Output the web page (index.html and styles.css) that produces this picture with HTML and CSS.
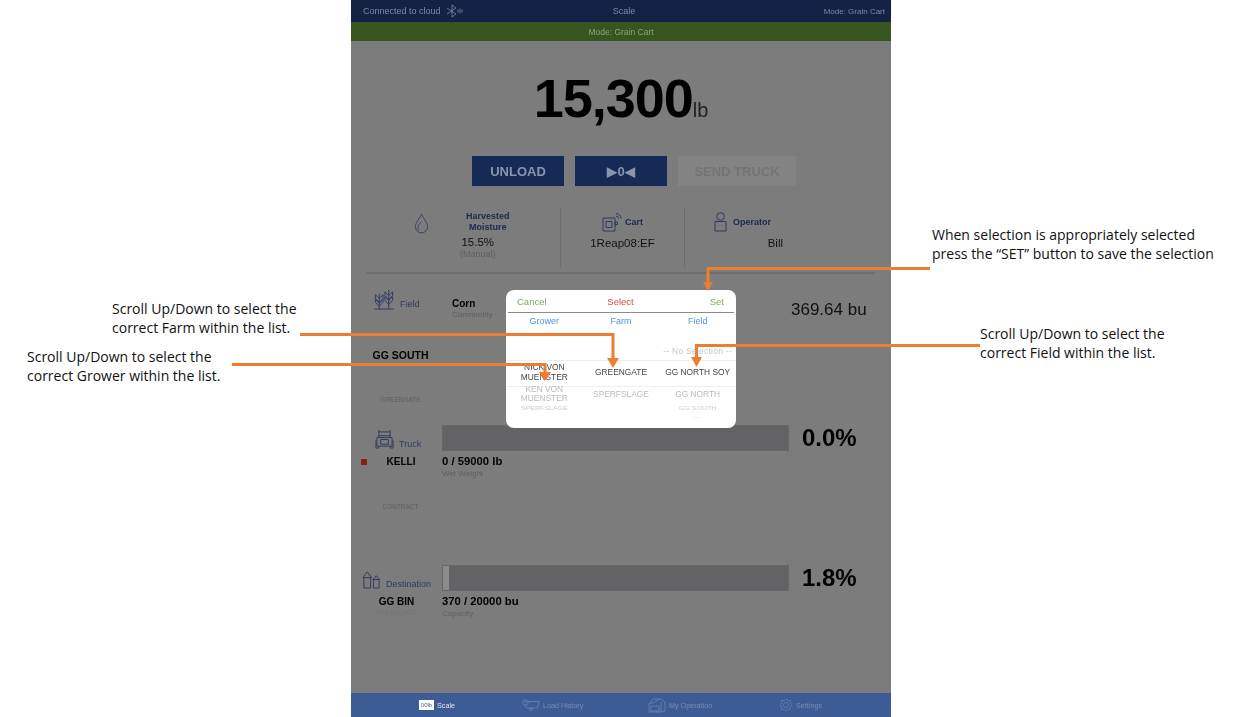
FILE: index.html
```html
<!DOCTYPE html>
<html lang="en">
<head>
    <meta charset="UTF-8">
    <meta name="viewport" content="width=device-width, initial-scale=1.0">
    <title>Scale - Grain Cart</title>
    <link rel="stylesheet" href="styles.css">
</head>
<body>
    <div class="app">
        <header class="topbar">
            <div class="cloud">
                <span>Connected to cloud</span>
                <svg class="bt-icon" viewBox="0 0 18 14" fill="none" stroke="currentColor" stroke-width=".8">
                    <path d="M1 4l9 6-4 3V1l4 3-9 6"/>
                    <path d="M12 5.500v3M14 4.500v5M16 5.500v3"/>
                </svg>
            </div>
            <div class="title">Scale</div>
            <div class="mode">Mode: Grain Cart</div>
        </header>
        <div class="modebar">Mode: Grain Cart</div>

        <div class="weight">15,300<span class="unit">lb</span></div>

        <div class="actions">
            <button class="btn">UNLOAD</button>
            <button class="btn btn-zero">&#9654;0&#9664;</button>
            <button class="btn btn-off">SEND TRUCK</button>
        </div>

        <section class="info">
            <div class="info-cell cell-moisture">
                <svg class="drop" viewBox="0 0 16 22" fill="none" stroke="currentColor" stroke-width="1">
                    <path d="M8 1C6 6 1.500 10 1.500 14.500a6.500 6.500 0 0 0 13 0C14.500 10 10 6 8 1z"/>
                    <path d="M5 18c-2-3 0-6 3-9"/>
                </svg>
                <div class="moisture">
                    <div class="label label-center">Harvested<br>Moisture</div>
                    <div class="value">15.5%</div>
                    <div class="sub">(Manual)</div>
                </div>
            </div>
            <div class="info-cell cell-cart">
                <div class="info-head">
                    <svg class="icon-cart" viewBox="0 0 20 20" fill="none" stroke="currentColor" stroke-width="1">
                        <path d="M1 6h12v13H1zM4 9.500h6v6H4zM13 10h2.500v2.500H13zM13 14h1"/>
                        <path d="M14 1.500a5 5 0 0 1 5 5M14 4a2.500 2.500 0 0 1 2.500 2.500"/>
                    </svg>
                    <span class="label">Cart</span>
                </div>
                <div class="value">1Reap08:EF</div>
            </div>
            <div class="info-cell cell-operator">
                <div class="info-head">
                    <svg class="icon-person" viewBox="0 0 13 20" fill="none" stroke="currentColor" stroke-width="1">
                        <circle cx="6.500" cy="4.500" r="3.800"/>
                        <path d="M1 9.500h11V19H1z"/>
                    </svg>
                    <span class="label">Operator</span>
                </div>
                <div class="value value-right">Bill</div>
            </div>
        </section>

        <section class="row row-field">
            <div class="side">
                <div class="side-head">
                    <svg class="icon-field" viewBox="0 0 22 22" fill="none" stroke="currentColor" stroke-width="1">
                        <path d="M1 21h20M6 21V5M16 21V1"/>
                        <path d="M6 10L2 6v4l4 4 4-4V6zM6 15l-4-4v3l4 4 4-4v-3zM16 7l-4-4v4l4 4 4-4V3zM16 12l-4-4v4l4 4 4-4V8z"/>
                    </svg>
                    <span class="side-title">Field</span>
                </div>
                <div class="side-name name-field">GG SOUTH</div>
                <div class="side-sub sub-field">GREENGATE</div>
            </div>
            <div class="middle">
                <div class="strong">Corn</div>
                <div class="sub">Commodity</div>
            </div>
            <div class="bushels">369.64 bu</div>
        </section>

        <section class="row row-truck">
            <div class="side">
                <div class="side-head">
                    <svg class="icon-truck" viewBox="0 0 20 22" fill="none" stroke="currentColor" stroke-width="1">
                        <path d="M4 1v8M16 1v8M4 3h12M4 7h12M2 9h16v9H2zM1 12v8h3v-2M19 12v8h-3v-2"/>
                        <path d="M6 11h8v5H6z"/>
                    </svg>
                    <span class="side-title">Truck</span>
                </div>
                <div class="name-line">
                    <span class="status"></span>
                    <span class="side-name">KELLI</span>
                </div>
                <div class="side-sub sub-truck">CONTRACT</div>
            </div>
            <div class="middle">
                <div class="bar"></div>
                <div class="strong amount">0 / 59000 lb</div>
                <div class="sub">Wet Weight</div>
            </div>
            <div class="percent">0.0%</div>
        </section>

        <section class="row row-dest">
            <div class="side">
                <div class="side-head">
                    <svg class="icon-silo" viewBox="0 0 20 20" fill="none" stroke="currentColor" stroke-width="1">
                        <path d="M2 8v11h7V8M1 8l4.500-6L10 8zM12 10v9h6v-9M11.500 10l3.500-4 3.500 4z"/>
                    </svg>
                    <span class="side-title">Destination</span>
                </div>
                <div class="side-name">GG BIN</div>
                <div class="side-sub sub-dest">GREENGATE</div>
            </div>
            <div class="middle">
                <div class="bar"><div class="bar-fill" style="width: 1.8%"></div></div>
                <div class="strong amount">370 / 20000 bu</div>
                <div class="sub">Capacity</div>
            </div>
            <div class="percent">1.8%</div>
        </section>

        <nav class="tabs">
            <div class="tab tab-active">
                <span class="scale-badge">00lb</span>
                <span>Scale</span>
            </div>
            <div class="tab">
                <svg class="tab-icon" viewBox="0 0 18 12" fill="none" stroke="currentColor" stroke-width=".8">
                    <circle cx="3.500" cy="3.500" r="2.700"/>
                    <path d="M6 2.500h11l-1.500 6.500H5L2.500 6M3.500 2v1.500h1.500"/>
                    <circle cx="9" cy="10" r="1.500"/>
                </svg>
                <span>Load History</span>
            </div>
            <div class="tab">
                <svg class="tab-icon tab-barn" viewBox="0 0 18 16" fill="none" stroke="currentColor" stroke-width=".8">
                    <path d="M1 15V7l4-5h6c3 0 6 2 6 5v7l-4 1zM1 7c4-1 9-3 10-5M13 15V5"/>
                    <path d="M3 9h8v5H3z"/>
                </svg>
                <span>My Operation</span>
            </div>
            <div class="tab">
                <svg class="tab-icon tab-gear" viewBox="0 0 16 16" fill="none" stroke="currentColor" stroke-width=".8" stroke-linejoin="round">
                    <path d="M15 8l-1.830 2.140-.220 2.810-2.810.220L8 15l-2.140-1.830-2.810-.220-.220-2.810L1 8l1.830-2.140.220-2.810 2.810-.220L8 1l2.140 1.830 2.810.220.220 2.810z"/>
                    <circle cx="8" cy="8" r="3"/>
                </svg>
                <span>Settings</span>
            </div>
        </nav>
    </div>

    <div class="modal">
        <div class="modal-head">
            <span class="green">Cancel</span>
            <span class="red">Select</span>
            <span class="green head-right">Set</span>
        </div>
        <div class="modal-tabs">
            <span>Grower</span>
            <span>Farm</span>
            <span>Field</span>
        </div>
        <div class="picker">
            <div class="pick-row pick-top">
                <span></span><span></span><span>-- No Selection --</span>
            </div>
            <div class="pick-row pick-current">
                <span>NICK VON MUENSTER</span><span>GREENGATE</span><span>GG NORTH SOY</span>
            </div>
            <div class="pick-row pick-next">
                <span>KEN VON MUENSTER</span><span>SPERFSLAGE</span><span>GG NORTH</span>
            </div>
            <div class="pick-row pick-last">
                <span>SPERFSLAGE</span><span></span><span>GG SOUTH</span>
            </div>
            <div class="pick-row pick-fade">
                <span></span><span></span><span>----</span>
            </div>
        </div>
    </div>

    <p class="note note-set">When selection is appropriately selected<br>press the &#8220;SET&#8221; button to save the selection</p>
    <p class="note note-farm">Scroll Up/Down to select the<br>correct Farm within the list.</p>
    <p class="note note-grower">Scroll Up/Down to select the<br>correct Grower within the list.</p>
    <p class="note note-field">Scroll Up/Down to select the<br>correct Field within the list.</p>

    <svg class="arrows" viewBox="0 0 1240 717" fill="none" stroke="#ed7d31" stroke-width="3">
        <path d="M930 268.500H708V284"/>
        <path d="M703 282h10l-5 9z" class="head"/>
        <path d="M300 334.500H613V360"/>
        <path d="M607 358h12l-6 10z" class="head"/>
        <path d="M232 364.500H545V372"/>
        <path d="M539 372h12l-6 9z" class="head"/>
        <path d="M980 345.500H696.500V358"/>
        <path d="M691 357h11l-5.500 10z" class="head"/>
    </svg>
</body>
</html>
```

FILE: styles.css
```css
body {
    margin: 0;
    background-color: #fff;
    font-family: "Liberation Sans", Arial, sans-serif;
    color: #000;
    overflow: hidden;
}

.app {
    width: 540px;
    height: 717px;
    margin-left: 351px;
    display: flex;
    flex-direction: column;
    background-color: #7c7c7c;
    filter: blur(.35px);
}

/* top bars */
.topbar {
    height: 22px;
    display: grid;
    grid-template-columns: 1fr auto 1fr;
    align-items: center;
    padding: 0 6px 0 12px;
    background-color: #142345;
    color: #7f8aa0;
    font-size: 9px;
}

.cloud {
    display: flex;
    align-items: center;
    gap: 5px;
}

.bt-icon {
    width: 18px;
    height: 14px;
}

.mode {
    text-align: right;
    font-size: 8px;
}

.modebar {
    height: 19px;
    line-height: 20px;
    text-align: center;
    background-color: #37561f;
    color: #8f9f80;
    font-size: 8.500px;
}

/* weight */
.weight {
    height: 115px;
    box-sizing: border-box;
    padding-top: 29px;
    text-align: center;
    font-size: 54px;
    line-height: 56px;
    font-weight: bold;
    letter-spacing: -1px;
}

.unit {
    font-size: 20px;
    font-weight: normal;
    letter-spacing: 0;
    color: #222;
}

/* buttons */
.actions {
    display: flex;
    gap: 11px;
    padding-left: 121px;
}

.btn {
    width: 92px;
    height: 30px;
    padding: 0;
    border: none;
    background-color: #152b56;
    color: #8a94aa;
    font-family: inherit;
    font-size: 13px;
    font-weight: bold;
}

.btn-off {
    width: 118px;
    background-color: #838383;
    color: #747474;
}

/* info strip */
.info {
    display: flex;
    height: 64px;
    margin: 22px 16px 0 15px;
    border-bottom: 2px solid #6e6e6e;
}

.info-cell {
    height: 60px;
    text-align: center;
    font-size: 11px;
}

.cell-moisture {
    width: 195px;
    display: flex;
    border-right: 1px solid #6e6e6e;
    box-sizing: border-box;
}

.drop {
    width: 15px;
    height: 21px;
    margin: 5px 0 0 48px;
    color: #36416a;
}

.moisture {
    margin-left: 17px;
    padding-top: 3px;
}

.moisture .label {
    margin-left: 20px;
}

.moisture .value {
    margin-top: 2px;
}

.cell-cart {
    width: 124px;
    border-right: 1px solid #6e6e6e;
    box-sizing: border-box;
}

.cell-operator {
    flex: 1;
}

.info-head {
    height: 28px;
    display: flex;
    align-items: center;
    justify-content: center;
    gap: 3px;
}

.cell-operator .info-head {
    justify-content: flex-start;
    padding-left: 29px;
    gap: 6px;
}

.label {
    color: #1c2850;
    font-size: 9px;
    font-weight: bold;
    line-height: 11px;
}

.value {
    font-size: 11.500px;
    line-height: 14px;
    color: #111;
}

.value-right {
    text-align: right;
    margin-right: 92px;
}

.icon-cart,
.icon-person {
    height: 20px;
    color: #2e3a60;
}

.icon-cart {
    width: 20px;
}

.icon-person {
    width: 13px;
}

.sub {
    color: #5f5f5f;
    font-size: 8px;
    line-height: 10px;
}

.moisture .sub {
    font-size: 9px;
}

/* rows */
.row {
    display: grid;
    grid-template-columns: 91px 347px 1fr;
}

.row-field {
    height: 146px;
}

.row-truck {
    height: 140px;
}

.row-dest {
    flex: 1;
}

.side {
    text-align: center;
}

.side-head {
    display: flex;
    align-items: flex-end;
    font-size: 9px;
    color: #2e3a60;
}

.side-title {
    margin-left: 5px;
    line-height: 11px;
}

.side-name {
    font-size: 10px;
    font-weight: bold;
    line-height: 12px;
}

.side-sub {
    color: #5f5f5f;
    font-size: 6.500px;
    line-height: 8px;
}

.row-field .side-head {
    padding: 15px 0 0 22px;
}

.icon-field {
    width: 22px;
    height: 21px;
}

.name-field {
    font-size: 10.500px;
    margin-top: 39px;
    padding-left: 8px;
}

.sub-field {
    margin-top: 35px;
    padding-left: 8px;
}

.row-truck .side-head {
    padding: 9px 0 0 24px;
}

.icon-truck {
    width: 19px;
    height: 21px;
}

.name-line {
    display: flex;
    align-items: center;
    margin-top: 6px;
    padding-left: 10px;
}

.status {
    width: 6px;
    height: 6px;
    background-color: #8e1b17;
}

.name-line .side-name {
    flex: 1;
    padding-right: 7px;
}

.sub-truck {
    margin-top: 35px;
    padding-left: 8px;
}

.row-dest .side-head {
    padding: 9px 0 0 11px;
}

.icon-silo {
    width: 19px;
    height: 21px;
}

.row-dest .side-name {
    margin-top: 6px;
}

.sub-dest {
    color: #727272;
    margin-top: 1px;
}

.middle {
    min-width: 0;
}

.row-field .middle {
    padding: 24px 0 0 10px;
}

.strong {
    font-size: 10px;
    font-weight: bold;
    line-height: 12px;
}

.row-truck .middle,
.row-dest .middle {
    padding-top: 5px;
}

.bar {
    height: 26px;
    box-sizing: border-box;
    border: 1px solid #666;
    background-color: #636365;
}

.bar-fill {
    height: 100%;
    min-width: 6px;
    background-color: #8b8b8b;
}

.amount {
    margin-top: 4px;
    margin-bottom: 2px;
    font-size: 11.300px;
}

.bushels {
    padding: 26px 0 0 2px;
    font-size: 17px;
    color: #111;
}

.percent {
    padding: 5px 0 0 13px;
    font-size: 24px;
    line-height: 26px;
    font-weight: bold;
}

/* bottom tabs */
.tabs {
    height: 24px;
    display: grid;
    grid-template-columns: 103px 126px 131px 1fr;
    padding-left: 68px;
    background-color: #3d5c96;
    color: #7a8db3;
    font-size: 7.200px;
}

.tab {
    display: flex;
    align-items: center;
    gap: 3px;
}

.tab-active {
    color: #e4e8f0;
}

.scale-badge {
    width: 15px;
    height: 10px;
    line-height: 10px;
    text-align: center;
    background-color: #fff;
    color: #4d6596;
    font-size: 6px;
}

.tab-icon {
    width: 18px;
    height: 12px;
    color: #6f84ad;
}

.tab-barn {
    width: 18px;
    height: 16px;
}

.tab-gear {
    width: 14px;
    height: 14px;
}

/* picker dialog */
.modal {
    position: absolute;
    left: 506px;
    top: 290px;
    width: 230px;
    height: 138px;
    border-radius: 8px;
    background-color: #fff;
    overflow: hidden;
    filter: blur(.3px);
}

.modal-head {
    height: 22px;
    margin: 0 2px;
    padding: 0 10px 0 9px;
    display: grid;
    grid-template-columns: 1fr auto 1fr;
    align-items: center;
    border-bottom: 1px solid #8a8a8a;
    font-size: 9.500px;
}

.head-right {
    text-align: right;
}

.green {
    color: #7fa85a;
}

.red {
    color: #d8474a;
}

.modal-tabs {
    display: grid;
    grid-template-columns: repeat(3, 1fr);
    height: 17px;
    line-height: 17px;
    text-align: center;
    color: #4a98e0;
    font-size: 9px;
}

.pick-row {
    display: grid;
    grid-template-columns: repeat(3, 1fr);
    text-align: center;
    font-size: 8.400px;
    line-height: 10px;
}

.pick-top {
    height: 30px;
    padding-top: 16px;
    box-sizing: border-box;
    color: #c4c4c4;
    letter-spacing: .3px;
}

.pick-current {
    height: 27px;
    padding-bottom: 4px;
    align-items: center;
    border-top: 1px solid #eee;
    border-bottom: 1px solid #eee;
    box-sizing: border-box;
    color: #444;
}

.pick-next {
    height: 18px;
    margin-top: -2px;
    align-items: center;
    line-height: 9px;
    color: #bbb;
}

.pick-last {
    margin-top: 2px;
    font-size: 7px;
    line-height: 8px;
    color: #ccc;
    transform: scaleY(.7);
}

.pick-fade {
    margin-top: 1px;
    font-size: 6px;
    line-height: 6px;
    color: #ddd;
    transform: scaleY(.5);
}

/* callouts */
.note {
    position: absolute;
    margin: 0;
    font-family: "Open Sans", sans-serif;
    font-size: 14px;
    line-height: 19px;
    color: #111;
    white-space: nowrap;
}

.note-set {
    left: 932px;
    top: 225px;
}

.note-farm {
    left: 112px;
    top: 299px;
}

.note-grower {
    left: 27px;
    top: 347px;
}

.note-field {
    left: 980px;
    top: 324px;
}

.arrows {
    position: absolute;
    left: 0;
    top: 0;
    width: 1240px;
    height: 717px;
    pointer-events: none;
}

.arrows .head {
    fill: #ed7d31;
    stroke: none;
}
```
